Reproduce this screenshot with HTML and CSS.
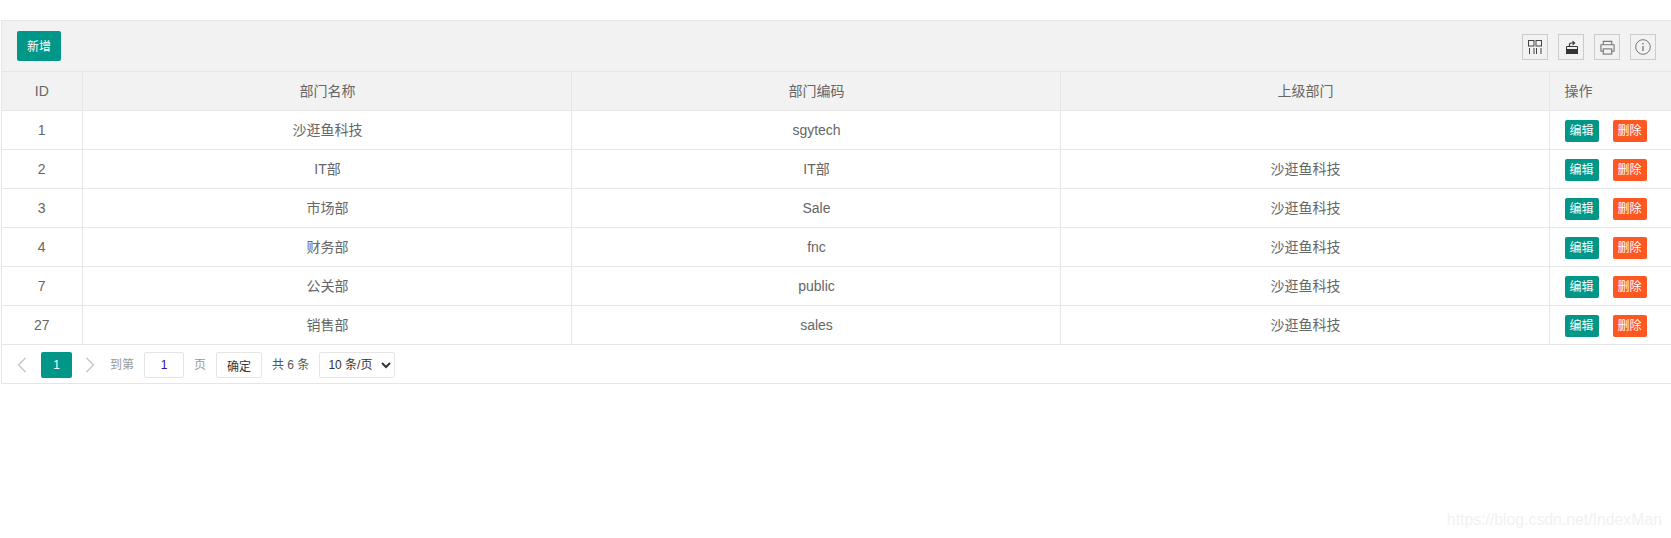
FILE: index.html
```html
<!DOCTYPE html>
<html lang="en">
<head>
    <meta charset="UTF-8">
    <title>部门管理</title>
    <link rel="stylesheet" href="styles.css">
</head>
<body>
    <div class="table-box">
        <div class="toolbar">
            <button class="btn btn-sm">新增</button>
            <div class="tools">
                <div class="tool">
                    <svg width="14" height="14" viewBox="0 0 14 14" fill="none" stroke="#444" stroke-width="1">
                        <rect x="0.500" y="0.500" width="5.500" height="5.500"/>
                        <rect x="8" y="0.500" width="5.500" height="5.500"/>
                        <path d="M1.500 8v6M6 8v6M8.500 8v6M13 8v6"/>
                    </svg>
                </div>
                <div class="tool">
                    <svg width="16" height="16" viewBox="0 0 16 16">
                        <path d="M3 10h12v5H3z" fill="#333"/>
                        <path d="M3.500 10.500V7.500h11v3" fill="none" stroke="#333" stroke-width="1"/>
                        <path d="M6.500 8V5.500c0-1 .5-1.500 1.500-1.500h1.500" fill="none" stroke="#333" stroke-width="1.200"/>
                        <path d="M9.500 1.500L12.500 4l-3 2.500z" fill="#333"/>
                    </svg>
                </div>
                <div class="tool">
                    <svg width="15" height="15" viewBox="0 0 16 16" fill="none" stroke="#777" stroke-width="1.200">
                        <path d="M3.500 5V1.500h9V5"/>
                        <path d="M3.500 12H1V5h14v7h-2.500"/>
                        <rect x="3.500" y="9.500" width="9" height="5.500"/>
                    </svg>
                </div>
                <div class="tool">
                    <svg width="16" height="16" viewBox="0 0 16 16" fill="none" stroke="#777" stroke-width="1">
                        <circle cx="8" cy="8" r="7.300"/>
                        <path d="M8 7v5M8 4v1.500" stroke-width="1.300"/>
                    </svg>
                </div>
            </div>
        </div>
        <table>
            <colgroup>
                <col class="col-id">
                <col class="col-text">
                <col class="col-text">
                <col class="col-text">
                <col>
            </colgroup>
            <thead>
                <tr>
                    <th>ID</th>
                    <th>部门名称</th>
                    <th>部门编码</th>
                    <th>上级部门</th>
                    <th class="left">操作</th>
                </tr>
            </thead>
            <tbody>
                <tr>
                    <td>1</td><td>沙逛鱼科技</td><td>sgytech</td><td></td>
                    <td class="left"><span class="btn btn-xs">编辑</span><span class="btn btn-xs btn-danger">删除</span></td>
                </tr>
                <tr>
                    <td>2</td><td>IT部</td><td>IT部</td><td>沙逛鱼科技</td>
                    <td class="left"><span class="btn btn-xs">编辑</span><span class="btn btn-xs btn-danger">删除</span></td>
                </tr>
                <tr>
                    <td>3</td><td>市场部</td><td>Sale</td><td>沙逛鱼科技</td>
                    <td class="left"><span class="btn btn-xs">编辑</span><span class="btn btn-xs btn-danger">删除</span></td>
                </tr>
                <tr>
                    <td>4</td><td>财务部</td><td>fnc</td><td>沙逛鱼科技</td>
                    <td class="left"><span class="btn btn-xs">编辑</span><span class="btn btn-xs btn-danger">删除</span></td>
                </tr>
                <tr>
                    <td>7</td><td>公关部</td><td>public</td><td>沙逛鱼科技</td>
                    <td class="left"><span class="btn btn-xs">编辑</span><span class="btn btn-xs btn-danger">删除</span></td>
                </tr>
                <tr>
                    <td>27</td><td>销售部</td><td>sales</td><td>沙逛鱼科技</td>
                    <td class="left"><span class="btn btn-xs">编辑</span><span class="btn btn-xs btn-danger">删除</span></td>
                </tr>
            </tbody>
        </table>
        <div class="pager">
            <svg class="arrow" width="10" height="16" viewBox="0 0 10 16" fill="none" stroke="#c2c2c2" stroke-width="1.200"><path d="M8.500 1L1.500 8l7 7"/></svg>
            <span class="page-current">1</span>
            <svg class="arrow" width="10" height="16" viewBox="0 0 10 16" fill="none" stroke="#c2c2c2" stroke-width="1.200"><path d="M1.500 1l7 7-7 7"/></svg>
            <span class="muted go">到第</span>
            <input class="page-input" type="text" value="1">
            <span class="muted">页</span>
            <button class="page-ok">确定</button>
            <span class="count">共 6 条</span>
            <select class="page-size">
                <option>10 条/页</option>
            </select>
        </div>
    </div>
    <div class="watermark">https://blog.csdn.net/IndexMan</div>
</body>
</html>
```

FILE: styles.css
```css
html, body {
    margin: 0;
    padding: 0;
    height: 538px;
    overflow: hidden;
    background-color: white;
}

body {
    font-family: "Liberation Sans", "Noto Sans CJK SC", sans-serif;
    font-size: 14px;
    line-height: 20px;
    color: #666;
    padding: 20px 0 0 1px;
    box-sizing: border-box;
}

.table-box {
    border: 1px solid #e6e6e6;
    border-right: none;
}

.toolbar {
    display: flex;
    justify-content: space-between;
    align-items: center;
    height: 51px;
    box-sizing: border-box;
    padding: 0 15px;
    background-color: #f2f2f2;
    border-bottom: 1px solid #e6e6e6;
}

.tools {
    display: flex;
    gap: 10px;
    margin-top: 2px;
}

.tool {
    display: flex;
    justify-content: center;
    align-items: center;
    width: 26px;
    height: 26px;
    box-sizing: border-box;
    border: 1px solid #ccc;
}

.btn {
    display: inline-block;
    background-color: #009688;
    color: white;
    border: none;
    border-radius: 2px;
    font-family: inherit;
    font-size: 12px;
    text-align: center;
}

.btn-sm {
    width: 44px;
    height: 30px;
    padding: 0 0 2px;
}

.btn-xs {
    width: 34px;
    height: 22px;
    line-height: 22px;
    margin-top: 2px;
    vertical-align: middle;
}

.btn-xs + .btn-xs {
    margin-left: 14px;
}

.btn-danger {
    background-color: #ff5722;
}

table {
    width: 100%;
    table-layout: fixed;
    border-collapse: collapse;
}

.col-id {
    width: 80px;
}

.col-text {
    width: 489px;
}

th, td {
    height: 38px;
    padding: 0 0 0 2px;
    box-sizing: border-box;
    text-align: center;
    font-weight: normal;
    border: 1px solid #e6e6e6;
}

tr > :first-child {
    border-left: none;
    padding-left: 0;
}

tr > :last-child {
    border-right: none;
}

thead tr:first-child th {
    border-top: none;
}

thead th {
    background-color: #f2f2f2;
}

tbody tr {
    height: 39px;
}

thead tr {
    height: 38px;
}

tr > .left {
    text-align: left;
    padding-left: 15px;
}

.pager {
    display: flex;
    align-items: center;
    height: 38px;
    font-size: 12px;
    color: #555;
    padding: 3px 0 0 15px;
    box-sizing: border-box;
}

.arrow {
    flex: none;
}

.page-current {
    width: 31px;
    height: 26px;
    line-height: 26px;
    margin: 0 13px 0 14px;
    text-align: center;
    color: white;
    background-color: #009688;
    border-radius: 2px;
}

.muted {
    color: #999;
}

.go {
    margin-left: 15px;
}

.page-input {
    width: 40px;
    height: 26px;
    margin: 0 10px;
    padding: 0;
    box-sizing: border-box;
    border: 1px solid #e6e6e6;
    border-radius: 2px;
    text-align: center;
    font-family: inherit;
    font-size: 12px;
    color: #3b0a9e;
}

.page-ok {
    width: 46px;
    height: 26px;
    margin-left: 10px;
    padding: 0;
    background-color: white;
    border: 1px solid #e6e6e6;
    border-radius: 2px;
    font-family: inherit;
    font-size: 12px;
    color: #333;
}

.count {
    margin-left: 10px;
}

.page-size {
    width: 76px;
    height: 26px;
    margin-left: 10px;
    padding: 0 0 0 4px;
    background-color: white;
    border: 1px solid #e6e6e6;
    border-radius: 2px;
    font-family: inherit;
    font-size: 12px;
    color: #333;
}

.watermark {
    position: absolute;
    right: 9px;
    bottom: 8px;
    font-size: 15.8px;
    color: #f1f1f1;
}
```
